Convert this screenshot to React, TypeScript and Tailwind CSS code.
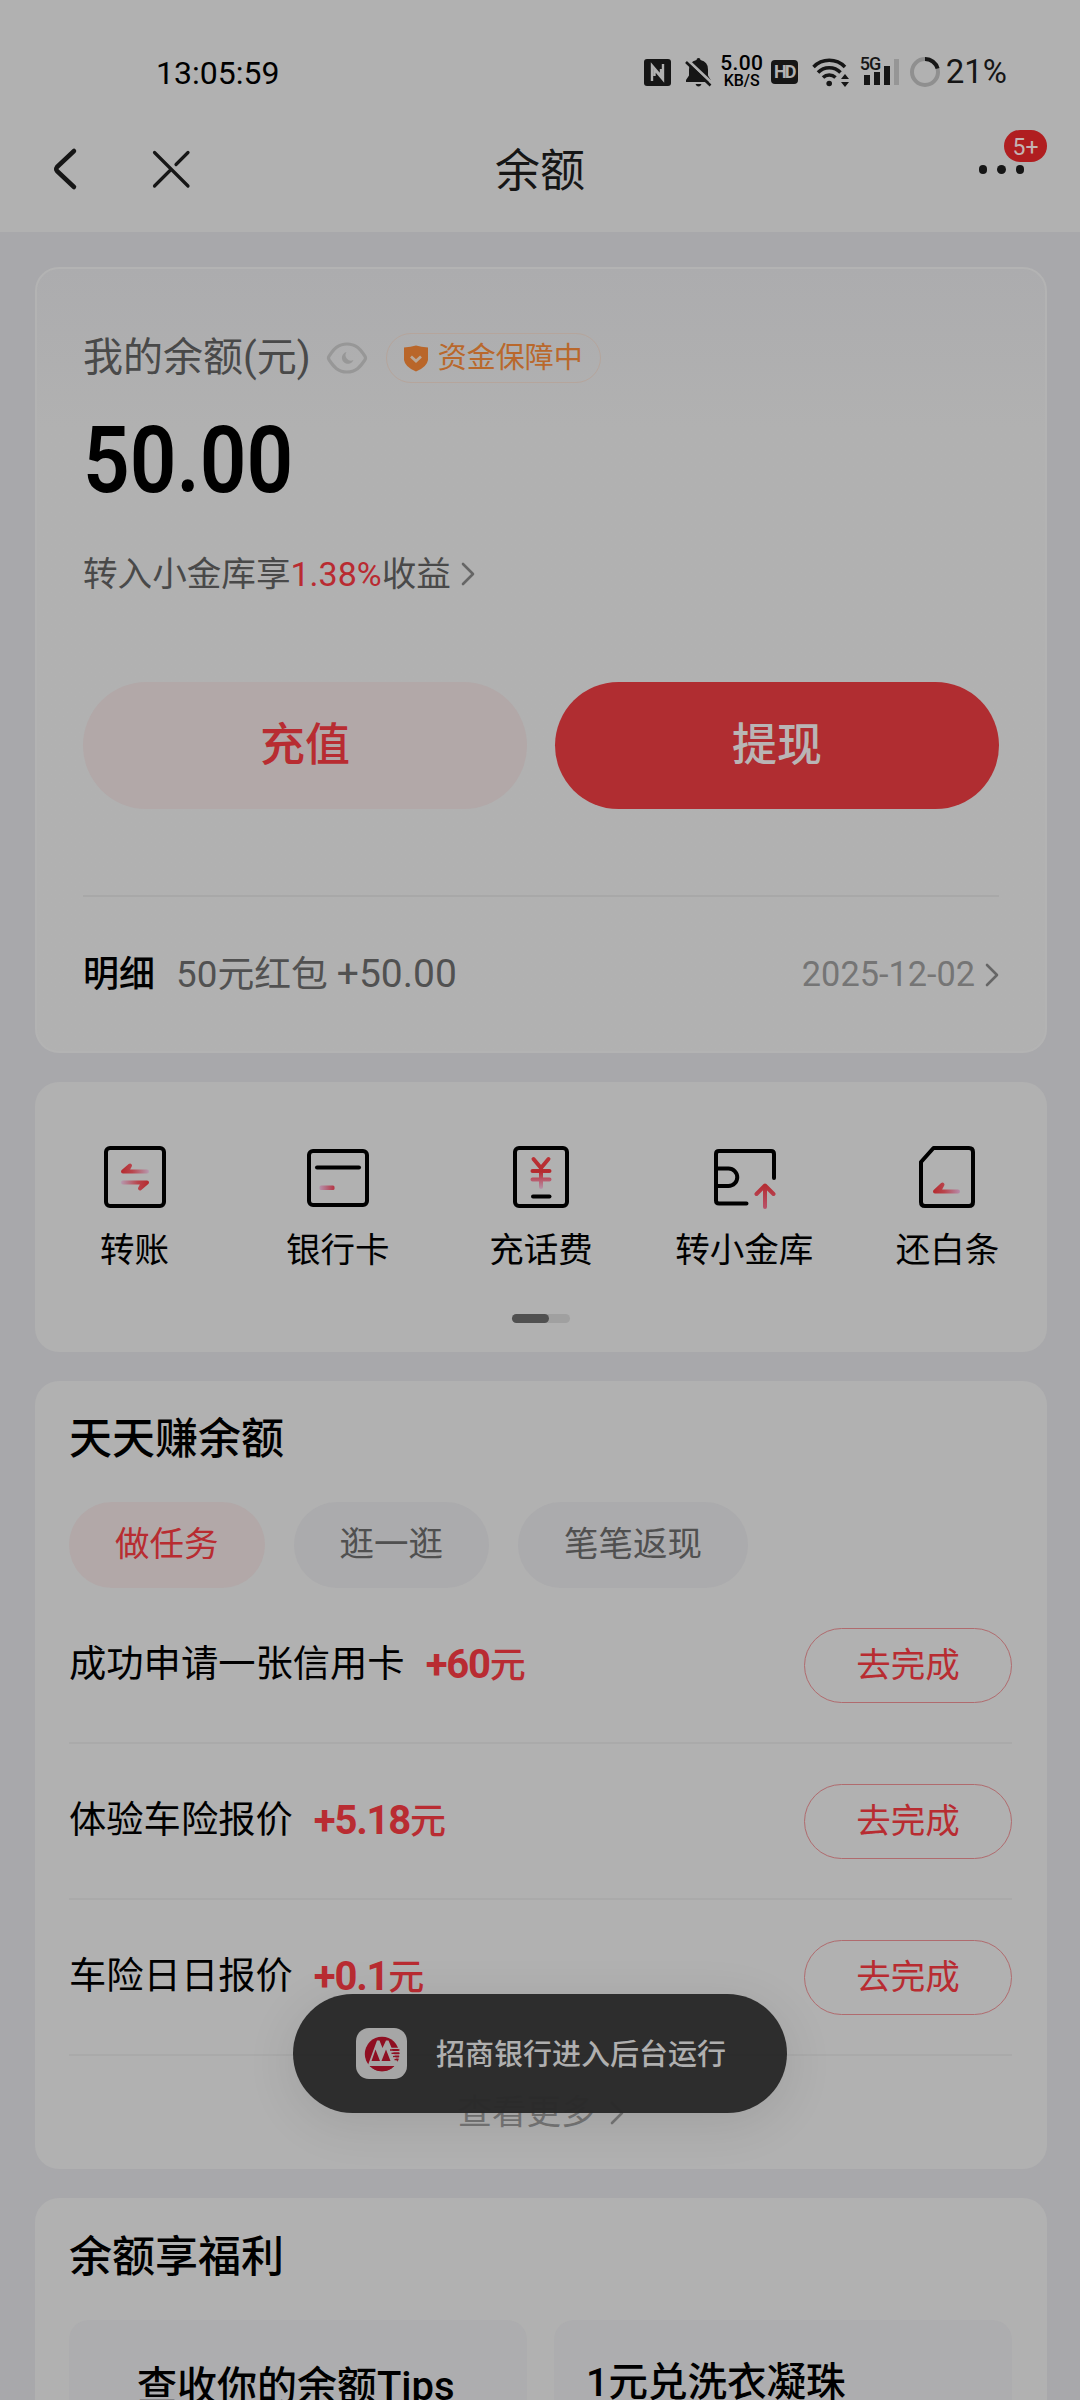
import React from "react";

const actions = [
  { label: "转账", icon: <TransferIcon /> },
  { label: "银行卡", icon: <CardIcon /> },
  { label: "充话费", icon: <PhoneFeeIcon /> },
  { label: "转小金库", icon: <VaultIcon /> },
  { label: "还白条", icon: <RepayIcon /> },
];

const tasks = [
  { title: "成功申请一张信用卡", reward: "+60" },
  { title: "体验车险报价", reward: "+5.18" },
  { title: "车险日日报价", reward: "+0.1" },
];

function TransferIcon() {
  return (
    <svg width="64" height="64" viewBox="0 0 64 64" fill="none" strokeWidth="4" strokeLinecap="round" strokeLinejoin="round">
      <defs>
        <linearGradient id="tl" x1="18" y1="0" x2="46" y2="0" gradientUnits="userSpaceOnUse">
          <stop stopColor="#b52a2e" />
          <stop offset="0.4" stopColor="#b9444c" />
          <stop offset="1" stopColor="#b59ab0" />
        </linearGradient>
        <linearGradient id="tr" x1="46" y1="0" x2="18" y2="0" gradientUnits="userSpaceOnUse">
          <stop stopColor="#b52a2e" />
          <stop offset="0.4" stopColor="#b9444c" />
          <stop offset="1" stopColor="#b59ab0" />
        </linearGradient>
      </defs>
      <rect x="3" y="3" width="58" height="58" rx="4" stroke="#000" />
      <path d="M44 26.500H20L27 20.500L24 26" stroke="url(#tl)" />
      <path d="M20 37.500H44L37 43.500L40 38" stroke="url(#tr)" />
    </svg>
  );
}

function CardIcon() {
  return (
    <svg width="64" height="64" viewBox="0 0 64 64" fill="none" strokeWidth="4" strokeLinecap="round">
      <defs>
        <linearGradient id="cd" x1="14" y1="0" x2="30" y2="0" gradientUnits="userSpaceOnUse">
          <stop stopColor="#b58fa8" />
          <stop offset="1" stopColor="#b52a38" />
        </linearGradient>
      </defs>
      <rect x="3" y="6" width="58" height="54" rx="4" stroke="#000" />
      <path d="M11 22.500H53" stroke="#000" />
      <rect x="13.500" y="40.500" width="15" height="4.500" rx="1.500" fill="url(#cd)" />
    </svg>
  );
}

function PhoneFeeIcon() {
  return (
    <svg width="64" height="64" viewBox="0 0 64 64" fill="none" strokeWidth="4" strokeLinecap="round" strokeLinejoin="round">
      <defs>
        <linearGradient id="yen" x1="0" y1="12" x2="0" y2="45" gradientUnits="userSpaceOnUse">
          <stop stopColor="#bb3236" />
          <stop offset="0.45" stopColor="#b52a2e" />
          <stop offset="0.7" stopColor="#b95a6c" />
          <stop offset="1" stopColor="#b59ab0" />
        </linearGradient>
      </defs>
      <rect x="6" y="3" width="52" height="58" rx="4" stroke="#000" />
      <path d="M24.500 14L32 23L39.500 14M32 23V42M23.500 26H40.500M23.500 34.500H40.500" stroke="url(#yen)" />
      <path d="M24 51.500H40.500" stroke="#000" />
    </svg>
  );
}

function VaultIcon() {
  return (
    <svg width="64" height="64" viewBox="0 0 64 64" fill="none" strokeWidth="4" strokeLinecap="round" strokeLinejoin="round">
      <defs>
        <linearGradient id="up" x1="0" y1="38" x2="0" y2="64" gradientUnits="userSpaceOnUse">
          <stop stopColor="#b52a2e" />
          <stop offset="1" stopColor="#b8536a" />
        </linearGradient>
      </defs>
      <path d="M34.500 58.500H7Q4 58.500 4 55.500V9Q4 6 7 6H59Q62 6 62 9V33" stroke="#000" />
      <path d="M4 23.500H16.500A8.500 8.500 0 0 1 16.500 41H4" stroke="#000" />
      <path d="M53 62V40.500M44.500 49L53 40.500L61.500 49" stroke="url(#up)" />
    </svg>
  );
}

function RepayIcon() {
  return (
    <svg width="64" height="64" viewBox="0 0 64 64" fill="none" strokeWidth="4" strokeLinecap="round" strokeLinejoin="round">
      <defs>
        <linearGradient id="rp" x1="18" y1="0" x2="46" y2="0" gradientUnits="userSpaceOnUse">
          <stop stopColor="#b52a2e" />
          <stop offset="0.4" stopColor="#b9444c" />
          <stop offset="1" stopColor="#b590b0" />
        </linearGradient>
      </defs>
      <path d="M18.500 3H54Q58 3 58 7V57Q58 61 54 61H10Q6 61 6 57V17Z" stroke="#000" />
      <path d="M43 46.500H20L27.500 39.500L24 46" stroke="url(#rp)" />
    </svg>
  );
}

function Chevron({ color }: { color: string }) {
  return (
    <svg width="14" height="24" viewBox="0 0 14 24" fill="none" stroke={color} strokeWidth="2.600" strokeLinecap="round" strokeLinejoin="round">
      <path d="M2 2L12 12L2 22" />
    </svg>
  );
}

function StatusBar() {
  return (
    <div className="flex h-[106px] items-start justify-between pt-[50px] pl-[156px] pr-[73px] text-[#161616]">
      <span className="text-[32px] leading-[46px] text-black">13:05:59</span>
      <div className="flex h-[44px] items-center">
        {/* nfc */}
        <svg width="27" height="27" viewBox="0 0 27 27" fill="none">
          <rect width="27" height="27" rx="3" fill="#161616" />
          <path d="M8 22V6.500L17 17V10M19 5V20.500L10.500 10.500V17" stroke="#b1b1b1" strokeWidth="2.400" />
        </svg>
        {/* muted bell */}
        <svg className="ml-[13px]" width="29" height="30" viewBox="0 0 29 30" fill="none">
          <path d="M14.500 1Q16.500 1 16.500 3Q24 4.500 24 12.500V18.500L27 23.500V25H2V23L5 18.500V12.500Q5 4.500 12.500 3Q12.500 1 14.500 1ZM11.500 27H17.500Q16.500 29.500 14.500 29.500Q12.500 29.500 11.500 27Z" fill="#161616" />
          <path d="M3 2.500L29 27" stroke="#b1b1b1" strokeWidth="3" />
          <path d="M2 5L26.500 28.500" stroke="#161616" strokeWidth="2.600" />
        </svg>
        <div className="ml-[8px] flex w-[42px] flex-col items-center text-black">
          <span className="text-[21px] leading-[17px] font-medium tracking-[0.300px]">5.00</span>
          <span className="mt-px text-[16px] leading-[16px] font-medium">KB/S</span>
        </div>
        <div className="ml-[8px] flex h-[24px] w-[27px] items-center justify-center rounded-[4px] bg-[#161616] text-[18px] leading-none font-bold tracking-[-2px] text-[#b1b1b1]">
          HD
        </div>
        {/* wifi */}
        <svg className="ml-[14px]" width="38" height="30" viewBox="0 0 38 30" fill="none" stroke="#161616" strokeWidth="3.500">
          <path d="M1.500 10A22 22 0 0 1 33 10" />
          <path d="M6 15.500A15.500 15.500 0 0 1 28.500 15.500" />
          <path d="M11 20.500A9 9 0 0 1 23.500 20.500" />
          <circle cx="17.200" cy="26.500" r="2.800" fill="#161616" stroke="none" />
          <path d="M33 17L37 22H29ZM33 30L37 25H29Z" fill="#161616" stroke="none" />
        </svg>
        {/* signal */}
        <div className="relative ml-[14px] flex h-[28px] w-[37px] items-end gap-[4px] pb-px">
          <span className="absolute -top-[1px] -left-[4px] text-[18px] leading-[14px] font-medium tracking-[-1px]">5G</span>
          <span className="h-[10px] w-[6px] bg-[#161616]"></span>
          <span className="h-[13px] w-[6px] bg-[#161616]"></span>
          <span className="h-[19px] w-[6px] bg-[#161616]"></span>
          <span className="h-[26px] w-[5px] bg-[#969696]"></span>
        </div>
        {/* battery */}
        <svg className="ml-[9px]" width="30" height="30" viewBox="0 0 30 30" fill="none" strokeWidth="4">
          <circle cx="15" cy="15" r="13" stroke="#8f8f8f" />
          <path d="M15 2A13 13 0 0 1 27.600 11.500" stroke="#161616" />
        </svg>
        <span className="ml-[6px] text-[33px] leading-[46px]">21%</span>
      </div>
    </div>
  );
}

function Header() {
  return (
    <div className="relative flex h-[126px] items-center justify-center pt-[6px]">
      <svg className="absolute top-[41px] left-[52px]" width="140" height="46" viewBox="0 0 140 46" fill="none" stroke="#161616" strokeLinecap="round" strokeLinejoin="round">
        <path d="M22 4L5 20Q3.500 22 5 24L22 40" strokeWidth="4.500" />
        <path d="M102.500 5.500L136 39M102.500 39L119 22.500M136 5.500L124 17.500" strokeWidth="3.200" />
      </svg>
      <h1 className="text-[45px] leading-[60px] text-[#161616]">余额</h1>
      <div className="absolute top-[59px] right-[56px] flex gap-[10px]">
        <span className="size-[8.500px] rounded-full bg-[#161616]"></span>
        <span className="size-[8.500px] rounded-full bg-[#161616]"></span>
        <span className="size-[8.500px] rounded-full bg-[#161616]"></span>
      </div>
      <div className="absolute top-[24px] right-[33px] flex h-[32px] w-[43px] items-center justify-center rounded-full bg-[#b01e20] pt-[2px] text-[23px] leading-none text-[#c4b4b4]">
        5+
      </div>
    </div>
  );
}

function BalanceCard() {
  return (
    <section className="h-[786px] rounded-[24px] border-2 border-[#b3b3b3] bg-linear-to-b from-[#acacae] to-[#b1b1b1] to-[160px] px-[46px] pt-[59px]">
      <div className="flex h-[60px] items-center">
        <span className="text-[40px] leading-[60px] text-[#494949]">我的余额(元)</span>
        <svg className="ml-[15px] shrink-0" width="42" height="32" viewBox="0 0 42 32" fill="none">
          <path d="M21 2C30 2 34 7 38.500 13.500Q40.500 16 38.500 18.500C34 25 30 30 21 30S8 25 3.500 18.500Q1.500 16 3.500 13.500C8 7 12 2 21 2Z" stroke="#979797" strokeWidth="3.200" />
          <path d="M20.500 10A6 6 0 1 0 27.500 18A5.500 5.500 0 0 1 20.500 10Z" fill="#979797" />
        </svg>
        <div className="ml-[18px] flex h-[50px] w-[215px] items-center rounded-full border border-[#b5a59c] pl-[16px]">
          <svg width="26" height="27" viewBox="0 0 26 27" fill="none">
            <path d="M13 0.500Q18 2 25 2.500V15Q24 22 13 26.500Q2 22 1 15V2.500Q8 2 13 0.500Z" fill="#b9662a" />
            <path d="M8 11.500L13 16L18 11.500" stroke="#b9a898" strokeWidth="2.800" />
          </svg>
          <span className="ml-[9px] text-[29px] leading-[40px] text-[#b9682c]">资金保障中</span>
        </div>
      </div>

      <div className="mt-[24px] h-[98px]">
        <span className="inline-block origin-left scale-x-[0.88] text-[93px] leading-[98px] font-semibold text-black">50.00</span>
      </div>

      <div className="mt-[39px] flex h-[50px] items-center text-[34.600px] leading-[50px] text-[#494949]">
        <span>转入小金库享</span>
        <span className="text-[34px] text-[#b92b31]">1.38%</span>
        <span>收益</span>
        <span className="ml-[10px]">
          <Chevron color="#666666" />
        </span>
      </div>

      <div className="mt-[83px] flex gap-[28px]">
        <div className="flex h-[127px] flex-1 items-center justify-center rounded-full bg-[#b2a8a8] text-[45px] font-medium text-[#b82c31]">
          充值
        </div>
        <div className="flex h-[127px] flex-1 items-center justify-center rounded-full bg-[#b02d31] text-[45px] font-medium text-[#b9b5b5]">
          提现
        </div>
      </div>

      <div className="mt-[86px] h-[2px] bg-[#a8a8a8]"></div>

      <div className="mt-[48px] flex h-[60px] items-center text-[#515151]">
        <span className="text-[36px] font-medium text-black">明细</span>
        <span className="ml-[21px] text-[36.800px]">50元红包</span>
        <span className="ml-[9px] pb-[2px] text-[39px]">+50.00</span>
        <span className="ml-auto text-[34.300px] text-[#757575]">2025-12-02</span>
        <span className="ml-[10px]">
          <Chevron color="#666666" />
        </span>
      </div>
    </section>
  );
}

function ActionsCard() {
  return (
    <section className="mt-[29px] h-[270px] rounded-[24px] bg-[#b1b1b1] pt-[63px]">
      <div className="-mx-[2px] grid grid-cols-5">
        {actions.map((item) => (
          <div key={item.label} className="flex flex-col items-center">
            {item.icon}
            <span className="mt-[16px] text-[34.500px] leading-[50px] text-black">{item.label}</span>
          </div>
        ))}
      </div>
      <div className="mx-auto mt-[39px] h-[9px] w-[58px] rounded-full bg-[#a0a0a0]">
        <div className="h-full w-[37px] rounded-full bg-[#505050]"></div>
      </div>
    </section>
  );
}

function TasksCard() {
  return (
    <section className="mt-[29px] h-[788px] rounded-[24px] bg-[#b1b1b1] pr-[35px] pl-[34px] pt-[28px]">
      <h2 className="text-[43px] leading-[60px] font-medium text-black">天天赚余额</h2>
      <div className="mt-[33px] flex gap-[29px] text-[34.500px]">
        <div className="flex h-[86px] items-center rounded-full bg-[#b2a8a8] px-[46px] text-[#b82c31]">做任务</div>
        <div className="flex h-[86px] items-center rounded-full bg-[#ababad] px-[46px] text-[#505050]">逛一逛</div>
        <div className="flex h-[86px] items-center rounded-full bg-[#ababad] px-[46px] text-[#505050]">笔笔返现</div>
      </div>
      <div>
        {tasks.map((task) => (
          <div key={task.title} className="flex h-[156px] items-center border-b-2 border-[#aaaaaa]">
            <span className="text-[37.300px] text-black">{task.title}</span>
            <span className="ml-[21px] text-[40px] tracking-[-1.200px] font-bold text-[#b92c32]">
              {task.reward}
              <span className="text-[36px] font-medium">元</span>
            </span>
            <div className="ml-auto flex h-[75px] w-[208px] items-center justify-center rounded-full border border-[#b06b6e] pt-[2px] text-[34.500px] text-[#b82c31]">
              去完成
            </div>
          </div>
        ))}
      </div>
      <div className="flex h-[114px] items-center justify-center text-[34.500px] text-[#757575]">
        <span>查看更多</span>
        <span className="ml-[14px]">
          <Chevron color="#757575" />
        </span>
      </div>
    </section>
  );
}

function WelfareCard() {
  return (
    <section className="mt-[29px] h-[400px] rounded-[24px] bg-[#b1b1b1] pr-[35px] pl-[34px] pt-[29px]">
      <h2 className="text-[43px] leading-[60px] font-medium text-black">余额享福利</h2>
      <div className="mt-[33px] grid grid-cols-2 gap-[27px] text-[40px] leading-[56px] font-medium text-black">
        <div className="h-[240px] rounded-[20px] bg-[#adadaf] pt-[39px] pl-[68px]">查收你的余额Tips</div>
        <div className="h-[240px] rounded-[20px] bg-[#adadaf] pt-[35px] pl-[32px] text-[39.500px]">1元兑洗衣凝珠</div>
      </div>
    </section>
  );
}

function Toast() {
  return (
    <div className="absolute top-[1994px] left-[293px] flex h-[119px] w-[494px] items-center rounded-full bg-[#2a2a2a]/98 pl-[63px] shadow-[0_10px_50px_rgba(0,0,0,0.1)]">
      <svg width="51" height="51" viewBox="0 0 51 51">
        <rect width="51" height="51" rx="13" fill="#a6a6a6" />
        <circle cx="26" cy="26" r="17.200" fill="#8f0f22" />
        {/* twin peaks */}
        <path d="M12 37L21 12.500H23.500L26.500 20L30 12.500H32.500L42 35.500L39 38H12Z" fill="#a6a6a6" />
        <path d="M15.500 33L19.500 21.500L24 33ZM25.500 33L30 21.500L34.500 33Z" fill="#8f0f22" />
        <path d="M15.500 39.500H37Q32.500 43.200 26 43.200T15.500 39.500Z" fill="#8f0f22" />
        <path d="M34 22H43.500M35.500 25.200H43.500M37 28.400H43.200M38.500 31.600H42.500" stroke="#8f0f22" strokeWidth="1.500" />
        <path d="M33 20.400H44M34.500 23.600H44M36 26.800H44M37.500 30H44" stroke="#a6a6a6" strokeWidth="1.200" />
      </svg>
      <span className="mt-[4px] ml-[29px] text-[29px] leading-none font-medium text-[#afafaf]">招商银行进入后台运行</span>
    </div>
  );
}

export default function App() {
  return (
    <div className="relative h-[2400px] w-[1080px] overflow-hidden bg-[#a8a8ab] font-['Roboto','Noto_Sans_CJK_SC',sans-serif] whitespace-nowrap">
      <div className="h-[232px] bg-[#b1b1b1]">
        <StatusBar />
        <Header />
      </div>
      <main className="pt-[35px] pr-[33px] pl-[35px]">
        <BalanceCard />
        <ActionsCard />
        <TasksCard />
        <WelfareCard />
      </main>
      <Toast />
    </div>
  );
}
